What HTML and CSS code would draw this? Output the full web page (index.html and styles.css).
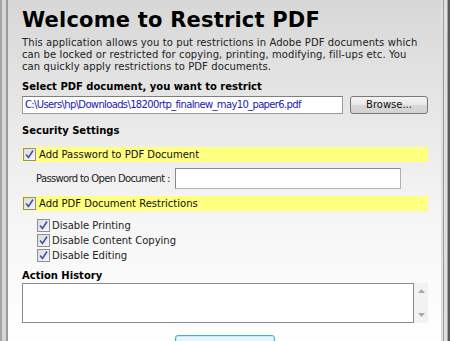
FILE: index.html
```html
<!DOCTYPE html>
<html>
<head>
<meta charset="utf-8">
<link rel="stylesheet" href="styles.css">
</head>
<body>
<div class="window">
  <div class="frame-left"></div>
  <div class="main">
    <h1 class="title">Welcome to Restrict PDF</h1>
    <p class="intro">This application allows you to put restrictions in Adobe PDF documents which<br>can be locked or restricted for copying, printing, modifying, fill-ups etc. You<br>can quickly apply restrictions to PDF documents.</p>
    <div class="label-bold sel-label">Select PDF document, you want to restrict</div>
    <div class="file-row">
      <div class="file-input">C:\Users\hp\Downloads\18200rtp_finalnew_may10_paper6.pdf</div>
      <div class="browse">Browse...</div>
    </div>
    <div class="label-bold sec-label">Security Settings</div>
    <div class="hl-row">
      <span class="cb"><svg width="13" height="13" viewBox="0 0 13 13"><path d="M3 6.5 L5.5 9.5 L10 2.5" fill="none" stroke="#3b54a6" stroke-width="1.6"/></svg></span>
      <span>Add Password to PDF Document</span>
    </div>
    <div class="pw-row">
      <span class="pw-label">Password to Open Document :</span>
      <div class="pw-input"></div>
    </div>
    <div class="hl-row hl2">
      <span class="cb"><svg width="13" height="13" viewBox="0 0 13 13"><path d="M3 6.5 L5.5 9.5 L10 2.5" fill="none" stroke="#3b54a6" stroke-width="1.6"/></svg></span>
      <span>Add PDF Document Restrictions</span>
    </div>
    <div class="subopts">
      <div class="opt"><span class="cb"><svg width="13" height="13" viewBox="0 0 13 13"><path d="M3 6.5 L5.5 9.5 L10 2.5" fill="none" stroke="#3b54a6" stroke-width="1.6"/></svg></span><span>Disable Printing</span></div>
      <div class="opt"><span class="cb"><svg width="13" height="13" viewBox="0 0 13 13"><path d="M3 6.5 L5.5 9.5 L10 2.5" fill="none" stroke="#3b54a6" stroke-width="1.6"/></svg></span><span>Disable Content Copying</span></div>
      <div class="opt"><span class="cb"><svg width="13" height="13" viewBox="0 0 13 13"><path d="M3 6.5 L5.5 9.5 L10 2.5" fill="none" stroke="#3b54a6" stroke-width="1.6"/></svg></span><span>Disable Editing</span></div>
    </div>
    <div class="label-bold hist-label">Action History</div>
    <div class="hist-row">
      <div class="history"></div>
      <div class="scroll">
        <svg width="7" height="4" viewBox="0 0 7 4"><path d="M0 4 L3.5 0 L7 4 Z" fill="#a8a8a8"/></svg>
        <svg width="7" height="4" viewBox="0 0 7 4"><path d="M0 0 L3.5 4 L7 0 Z" fill="#a8a8a8"/></svg>
      </div>
    </div>
    <div class="btn-row"><div class="apply"></div></div>
  </div>
  <div class="frame-right"></div>
</div>
</body>
</html>
```
FILE: styles.css
```css
html, body {
  margin: 0;
  padding: 0;
  background: #ffffff;
  overflow: hidden;
}
.window {
  display: flex;
  width: 454px;
  height: 341px;
  overflow: hidden;
  font-family: "DejaVu Sans", sans-serif;
  color: #1a1a1a;
}
.frame-left {
  width: 8px;
  flex: none;
  background: linear-gradient(to right, #a4a4a4 0 2px, #d6d6d6 2px 6px, #9a9a9a 6px 8px);
}
.frame-right {
  width: 13px;
  flex: none;
  background: linear-gradient(to right, #dedede 0 2px, #9c9c9c 2px 3px, #e0e0e0 3px 6px, #a6a6a6 6px 7px, #5a5a5a 7px 9px, #ffffff 9px 13px);
}
.main {
  flex: 1;
  min-width: 0;
  overflow: hidden;
  padding: 0 13px 0 14px;
  background: linear-gradient(to bottom, #d7d7d7 0%, #e6e6e6 30%, #f6f6f6 65%, #ffffff 100%);
}
.title {
  margin: 0;
  padding-top: 7px;
  font-size: 21px;
  line-height: 26px;
  font-weight: bold;
  color: #000;
  letter-spacing: 0.2px;
}
.intro {
  margin: 4px 0 0;
  font-size: 10px;
  line-height: 12px;
  letter-spacing: 0.1px;
  white-space: nowrap;
  color: #222;
}
.label-bold {
  font-weight: bold;
  font-size: 10px;
  line-height: 12px;
  color: #000;
}
.sel-label { margin-top: 8px; }
.file-row {
  display: flex;
  align-items: center;
  gap: 7px;
  margin-top: 3px;
}
.file-input {
  width: 321px;
  height: 18px;
  box-sizing: border-box;
  border: 1px solid #9a9a9a;
  border-top-color: #7e7e7e;
  background: #fff;
  color: #2020b0;
  font-size: 10px;
  letter-spacing: -0.65px;
  line-height: 16px;
  padding-left: 2px;
  white-space: nowrap;
  overflow: hidden;
}
.browse {
  width: 78px;
  height: 18px;
  box-sizing: border-box;
  border: 1px solid #777;
  border-radius: 3px;
  background: linear-gradient(to bottom, #f4f4f4 0%, #e8e8e8 50%, #d8d8d8 51%, #d2d2d2 100%);
  font-size: 10px;
  line-height: 16px;
  text-align: center;
  color: #111;
}
.sec-label { margin-top: 11px; }
.hl-row {
  display: flex;
  align-items: center;
  gap: 3px;
  height: 15px;
  margin-top: 10px;
  background: #ffff80;
  font-size: 10px;
  color: #111;
}
.hl2 { margin-top: 7px; }
.cb {
  width: 13px;
  height: 13px;
  box-sizing: border-box;
  border: 1px solid #8e8f8f;
  background: linear-gradient(135deg, #dcdcdc, #f6f6f6);
  display: inline-flex;
  flex: none;
}
.cb svg { margin: -1px; }
.hl-row .cb { margin-left: 1px; }
.pw-row {
  display: flex;
  align-items: center;
  margin-top: 6px;
  padding-left: 14px;
  height: 21px;
}
.pw-label {
  font-size: 10px;
  color: #222;
  width: 139px;
  white-space: nowrap;
  letter-spacing: -0.65px;
}
.pw-input {
  width: 226px;
  height: 21px;
  box-sizing: border-box;
  border: 1px solid #8a8a8a;
  border-right-color: #b0b0b0;
  border-bottom-color: #b8b8b8;
  background: #fff;
}
.subopts {
  margin-top: 8px;
  padding-left: 15px;
  display: flex;
  flex-direction: column;
  gap: 2px;
}
.opt {
  display: flex;
  align-items: center;
  gap: 2px;
  height: 13px;
  font-size: 10px;
  color: #222;
}
.hist-label { margin-top: 8px; }
.hist-row {
  display: flex;
  margin-top: 1px;
}
.history {
  width: 392px;
  height: 40px;
  box-sizing: border-box;
  border: 1px solid #8a8a8a;
  background: #fff;
}
.scroll {
  width: 14px;
  height: 40px;
  background: #f2f2f2;
  display: flex;
  flex-direction: column;
  align-items: center;
  justify-content: space-between;
  padding: 6px 0 6px;
  box-sizing: border-box;
}
.btn-row {
  margin-top: 12px;
  padding-left: 153px;
}
.apply {
  width: 100px;
  height: 20px;
  box-sizing: border-box;
  border: 1px solid #3cb0e2;
  border-radius: 3px;
  background: linear-gradient(to bottom, #eaf6fd, #d9f0fc);
  box-shadow: inset 0 0 0 1px #c8ecfb;
}
```
